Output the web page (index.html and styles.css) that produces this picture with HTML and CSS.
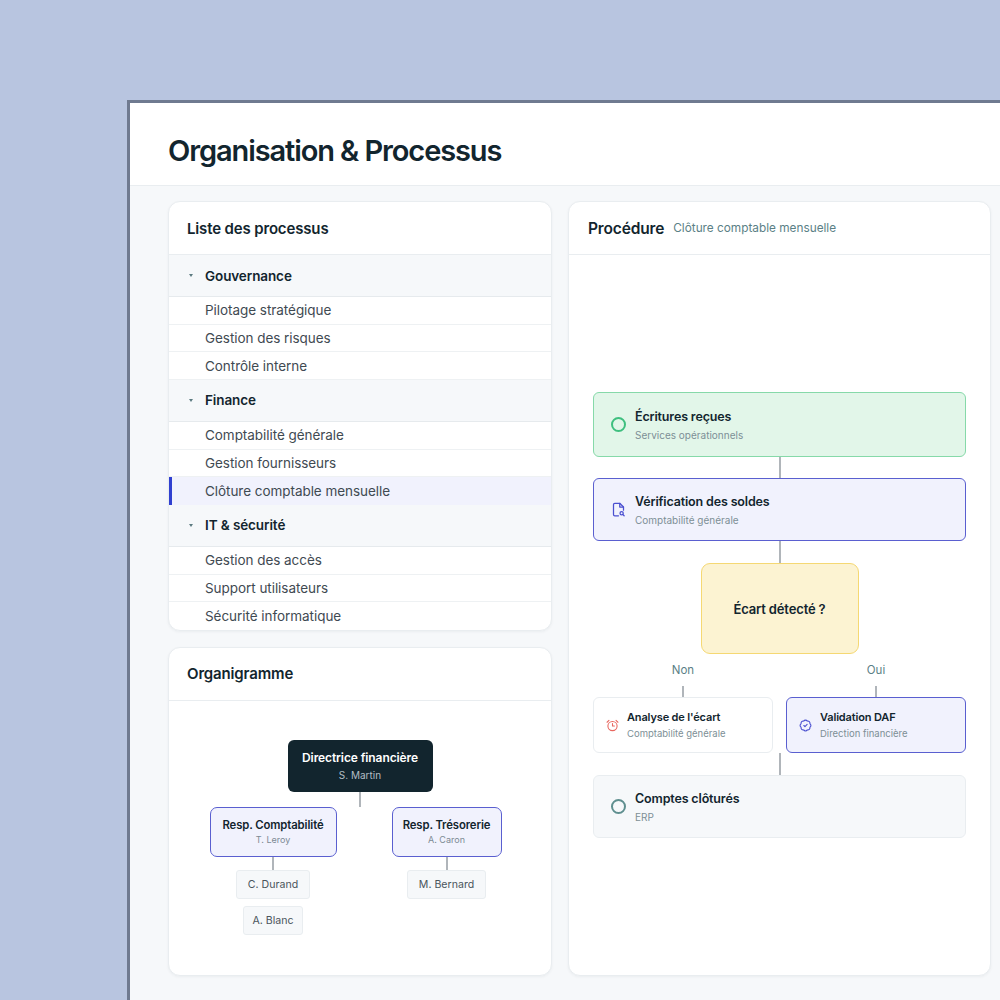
FILE: index.html
```html
<!DOCTYPE html>
<html lang="fr">
<head>
    <meta charset="UTF-8">
    <title>Organisation &amp; Processus</title>
    <link rel="stylesheet" href="styles.css">
</head>
<body>

    <div class="window">
        <div class="page-header">
            <h1>Organisation &amp; Processus</h1>
        </div>

        <div class="page-main">
            <div class="left-col">
                <div class="card">
                    <div class="card-header">
                        <h2>Liste des processus</h2>
                    </div>
                    <div class="group"><span class="arrow"></span>Gouvernance</div>
                    <div class="item">Pilotage stratégique</div>
                    <div class="item">Gestion des risques</div>
                    <div class="item">Contrôle interne</div>
                    <div class="group"><span class="arrow"></span>Finance</div>
                    <div class="item">Comptabilité générale</div>
                    <div class="item">Gestion fournisseurs</div>
                    <div class="item active">Clôture comptable mensuelle</div>
                    <div class="group"><span class="arrow"></span>IT &amp; sécurité</div>
                    <div class="item">Gestion des accès</div>
                    <div class="item">Support utilisateurs</div>
                    <div class="item">Sécurité informatique</div>
                </div>

                <div class="card">
                    <div class="card-header">
                        <h2>Organigramme</h2>
                    </div>
                    <div class="org-body">
                        <div class="org-top">
                            <div class="org-name">Directrice financière</div>
                            <div class="org-person">S. Martin</div>
                        </div>
                        <div class="line line-org-top"></div>
                        <div class="org-row">
                            <div class="org-col">
                                <div class="org-mid org-mid-a">
                                    <div class="org-name">Resp. Comptabilité</div>
                                    <div class="org-person">T. Leroy</div>
                                </div>
                                <div class="line line-org"></div>
                                <div class="org-leaf">C. Durand</div>
                                <div class="org-leaf second">A. Blanc</div>
                            </div>
                            <div class="org-col">
                                <div class="org-mid org-mid-b">
                                    <div class="org-name">Resp. Trésorerie</div>
                                    <div class="org-person">A. Caron</div>
                                </div>
                                <div class="line line-org"></div>
                                <div class="org-leaf">M. Bernard</div>
                            </div>
                        </div>
                    </div>
                </div>
            </div>

            <div class="card">
                <div class="card-header proc-header">
                    <h2>Procédure</h2>
                    <span class="proc-sub">Clôture comptable mensuelle</span>
                </div>
                <div class="flow-body">
                    <div class="step step-green">
                        <span class="ring ring-green"></span>
                        <div>
                            <div class="step-title">Écritures reçues</div>
                            <div class="step-sub">Services opérationnels</div>
                        </div>
                    </div>
                    <div class="line line-flow line-short"></div>
                    <div class="step step-blue">
                        <svg class="icon" viewBox="0 0 24 24" fill="none" stroke="#4a4fd0" stroke-width="2" stroke-linecap="round" stroke-linejoin="round">
                            <path d="M12 22H6a2 2 0 0 1-2-2V4a2 2 0 0 1 2-2h8l6 6v5"/>
                            <path d="M14 2v6h6"/>
                            <circle cx="17" cy="18" r="2.6"/>
                            <path d="m21 22-2.2-2.2"/>
                        </svg>
                        <div>
                            <div class="step-title">Vérification des soldes</div>
                            <div class="step-sub">Comptabilité générale</div>
                        </div>
                    </div>
                    <div class="line line-flow"></div>
                    <div class="decision">Écart détecté ?</div>
                    <div class="branches">
                        <div class="branch">
                            <div class="branch-label">Non</div>
                            <div class="line line-branch"></div>
                            <div class="step step-small step-white">
                                <svg class="icon icon-small" viewBox="0 0 24 24" fill="none" stroke="#e8675f" stroke-width="2" stroke-linecap="round" stroke-linejoin="round">
                                    <circle cx="12" cy="13" r="8.5"/>
                                    <path d="M12 8.5V13h3.5"/>
                                    <path d="M5.5 2.5 2 6"/>
                                    <path d="m22 6-3.5-3.5"/>
                                </svg>
                                <div>
                                    <div class="step-title">Analyse de l'écart</div>
                                    <div class="step-sub">Comptabilité générale</div>
                                </div>
                            </div>
                        </div>
                        <div class="branch">
                            <div class="branch-label">Oui</div>
                            <div class="line line-branch"></div>
                            <div class="step step-small step-blue">
                                <svg class="icon icon-small" viewBox="0 0 24 24" fill="none" stroke="#4a4fd0" stroke-width="2" stroke-linecap="round" stroke-linejoin="round">
                                    <path d="M3.85 8.62a4 4 0 0 1 4.78-4.77 4 4 0 0 1 6.74 0 4 4 0 0 1 4.78 4.78 4 4 0 0 1 0 6.74 4 4 0 0 1-4.77 4.78 4 4 0 0 1-6.75 0 4 4 0 0 1-4.78-4.77 4 4 0 0 1 0-6.76Z"/>
                                    <path d="m9 12 2 2 4-4"/>
                                </svg>
                                <div>
                                    <div class="step-title">Validation DAF</div>
                                    <div class="step-sub">Direction financière</div>
                                </div>
                            </div>
                        </div>
                    </div>
                    <div class="line line-flow"></div>
                    <div class="step step-grey">
                        <span class="ring ring-teal"></span>
                        <div>
                            <div class="step-title">Comptes clôturés</div>
                            <div class="step-sub">ERP</div>
                        </div>
                    </div>
                </div>
            </div>
        </div>
    </div>

</body>
</html>
```

FILE: styles.css
```css
html, body {
    margin: 0;
    height: 1000px;
    overflow: hidden;
}

body {
    background-color: #b8c5e0;
    color: #12252e;
    font-family: Inter, "Liberation Sans", sans-serif;
}

.window {
    box-sizing: border-box;
    margin: 100px 0 0 127px;
    width: 900px;
    height: 920px;
    border-top: 3px solid #6f7a90;
    border-left: 3px solid #6f7a90;
    background-color: #f6f8fa;
}

.page-header {
    box-sizing: border-box;
    height: 83px;
    padding: 29px 39px 0;
    background-color: white;
    border-bottom: 1px solid #e9edf0;
}

h1 {
    margin: 0 0 0 -1px;
    font-size: 29px;
    line-height: 38px;
    font-weight: 600;
    letter-spacing: -1.1px;
}

.page-main {
    display: grid;
    grid-template-columns: 384px 423px;
    gap: 16px;
    align-items: stretch;
    padding: 15px 38px 0;
}

.left-col {
    display: flex;
    flex-direction: column;
    gap: 16px;
}

.card {
    box-sizing: border-box;
    border: 1px solid #e9edf0;
    border-radius: 12px;
    background-color: white;
    box-shadow: 0 1px 3px rgba(20, 40, 60, 0.05);
    overflow: hidden;
}

.card-header {
    box-sizing: border-box;
    display: flex;
    align-items: center;
    height: 53px;
    padding: 0 18px;
    border-bottom: 1px solid #e9edf0;
}

h2 {
    margin: 0;
    font-size: 15px;
    font-weight: 600;
    letter-spacing: -0.15px;
}

.group {
    box-sizing: border-box;
    display: flex;
    align-items: center;
    height: 42px;
    padding-left: 20px;
    background-color: #f6f8fa;
    border-bottom: 1px solid #e6eaed;
    font-size: 13.5px;
    font-weight: 600;
    letter-spacing: -0.1px;
}

.arrow {
    width: 0;
    height: 0;
    margin-right: 12px;
    border-left: 2px solid transparent;
    border-right: 2px solid transparent;
    border-top: 3px solid #5b7a80;
}

.item {
    box-sizing: border-box;
    display: flex;
    align-items: center;
    height: 27.67px;
    padding-left: 36px;
    border-bottom: 1px solid #eef1f3;
    font-size: 13.5px;
    color: #3f4a52;
    letter-spacing: -0.05px;
}

.item:last-child {
    border-bottom: none;
}

.item.active {
    padding-left: 33px;
    border-left: 3px solid #3040d0;
    border-bottom: none;
    background-color: #f1f2fd;
}

.org-body {
    display: flex;
    flex-direction: column;
    align-items: center;
    justify-content: center;
    height: 274px;
}

.org-top {
    box-sizing: border-box;
    width: 145px;
    height: 52px;
    padding-top: 10px;
    border-radius: 6px;
    background-color: #12252e;
    color: white;
    text-align: center;
}

.org-name {
    font-size: 12px;
    line-height: 16px;
    font-weight: 600;
    letter-spacing: -0.1px;
}

.org-person {
    margin-top: 2px;
    font-size: 10px;
    line-height: 14px;
    color: #7d8a94;
}

.org-top .org-person {
    color: #b3bec5;
}

.org-row {
    display: flex;
    gap: 55px;
    padding-right: 9px;
}

.org-col {
    display: flex;
    flex-direction: column;
    align-items: center;
}

.org-mid {
    box-sizing: border-box;
    height: 50px;
    padding-top: 9px;
    border: 1px solid #5a5fd0;
    border-radius: 7px;
    background-color: #f1f2fd;
    text-align: center;
}

.org-mid .org-name {
    font-size: 11.3px;
}

.org-mid .org-person {
    margin-top: 0;
    font-size: 9px;
}

.org-mid-a {
    width: 127px;
}

.org-mid-b {
    width: 110px;
}

.org-leaf {
    box-sizing: border-box;
    height: 29px;
    padding: 0 10.5px;
    border: 1px solid #e9edf0;
    border-radius: 3px;
    background-color: #f6f8fa;
    font-size: 10.6px;
    line-height: 27px;
    color: #4a555c;
}

.org-leaf.second {
    margin-top: 7px;
    padding: 0 8.5px;
}

.line {
    width: 2px;
    background-color: #b0b5ba;
}

.line-org-top {
    height: 15px;
}

.line-org {
    height: 13px;
}

.proc-header {
    gap: 9px;
    padding: 0 19px;
}

.proc-header h2 {
    font-size: 15.5px;
}

.proc-sub {
    font-size: 11.8px;
    color: #5b7f86;
}

.flow-body {
    display: flex;
    flex-direction: column;
    align-items: center;
    justify-content: center;
    height: 720px;
    padding: 0 24px;
}

.step {
    box-sizing: border-box;
    display: flex;
    align-items: center;
    gap: 9px;
    width: 100%;
    height: 63px;
    padding-left: 17px;
    border: 1px solid #e9edf0;
    border-radius: 6px;
}

.step-green {
    height: 65px;
    border-color: #86d9a9;
    background-color: #e2f6e9;
}

.step-blue {
    border-color: #5a5fd0;
    background-color: #f1f2fd;
}

.step-white {
    background-color: white;
}

.step-grey {
    background-color: #f6f8fa;
}

.step-small {
    height: 56px;
    gap: 8px;
    padding-left: 12px;
}

.step-title {
    font-size: 12.5px;
    line-height: 17px;
    font-weight: 600;
    letter-spacing: -0.15px;
}

.step-sub {
    margin-top: 3px;
    font-size: 10px;
    line-height: 14px;
    color: #7d8f96;
}

.step-small .step-title {
    font-size: 11px;
    line-height: 15px;
}

.step-small .step-sub {
    margin-top: 2px;
    font-size: 9.5px;
}

.ring {
    box-sizing: border-box;
    flex: none;
    width: 15px;
    height: 15px;
    border-radius: 50%;
    border: 2px solid;
}

.ring-green {
    border-color: #3fbf7f;
}

.ring-teal {
    border-color: #5f8f8f;
}

.icon {
    flex: none;
    width: 15px;
    height: 15px;
}

.icon-small {
    width: 13px;
    height: 13px;
}

.line-flow {
    height: 22px;
}

.line-short {
    height: 21px;
}

.decision {
    box-sizing: border-box;
    display: flex;
    align-items: center;
    justify-content: center;
    width: 158px;
    height: 91px;
    border: 1px solid #f5d873;
    border-radius: 9px;
    background-color: #fcf3d2;
    font-size: 13px;
    font-weight: 600;
    letter-spacing: -0.15px;
}

.branches {
    display: flex;
    gap: 13px;
    width: 100%;
}

.branch {
    flex: 1;
    display: flex;
    flex-direction: column;
    align-items: center;
}

.branch-label {
    margin-top: 8px;
    font-size: 11.5px;
    line-height: 16px;
    color: #5b7f86;
}

.line-branch {
    height: 11px;
    margin-top: 8px;
}
```
